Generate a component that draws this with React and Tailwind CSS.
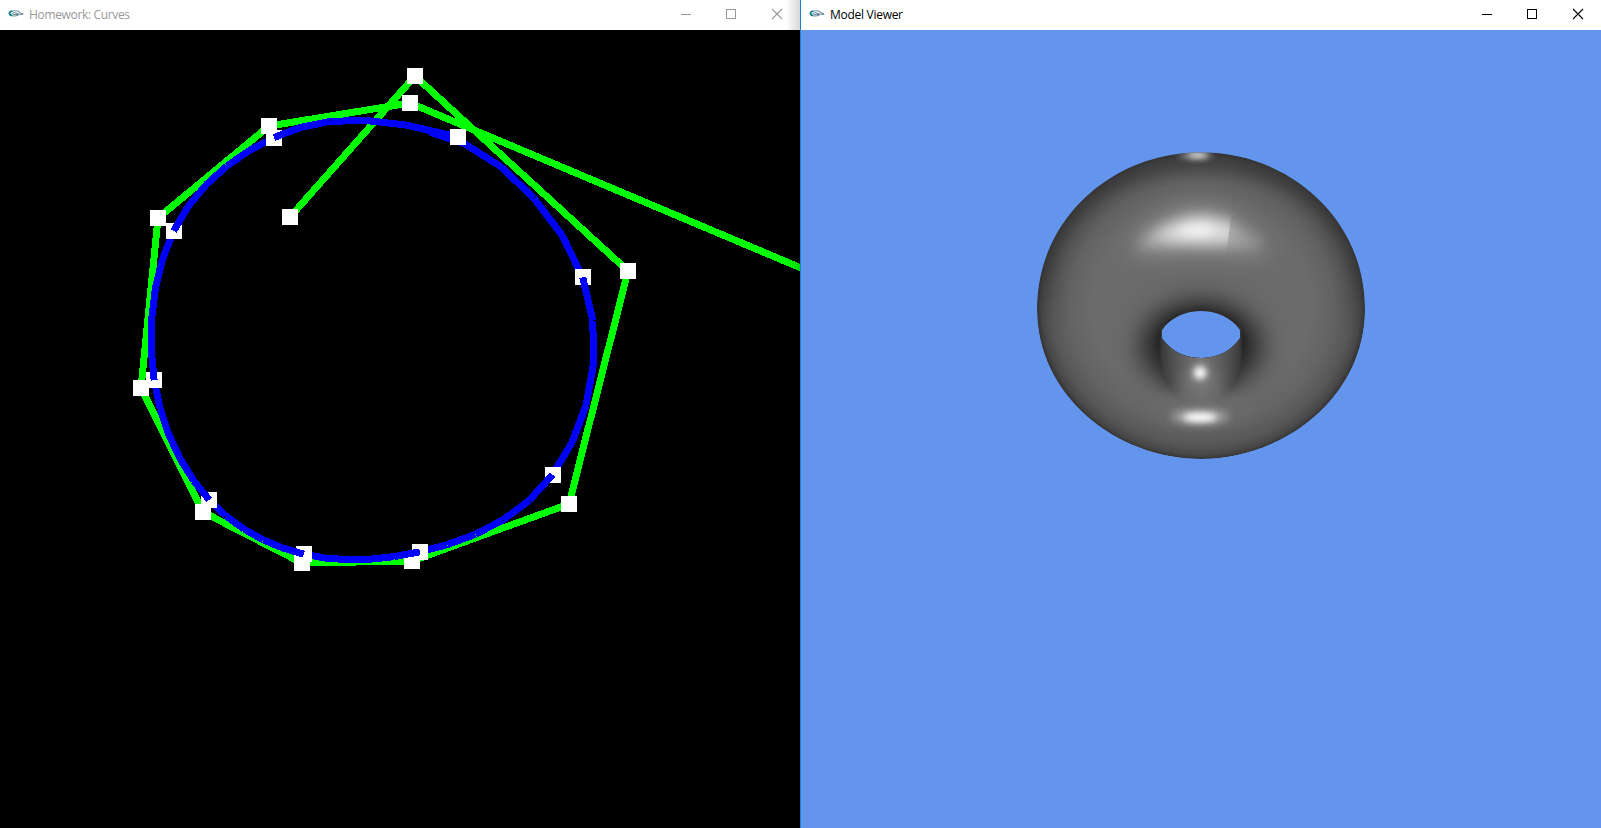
const CONTROL = [
  [290, 187], [415, 46], [628, 241], [569, 474], [412, 531], [302, 533],
  [203, 482], [141, 358], [158, 188], [269, 96], [410, 73], [839, 254],
];

function splinePoint(i, t) {
  const w = [
    (1 - t) ** 3,
    3 * t ** 3 - 6 * t ** 2 + 4,
    -3 * t ** 3 + 3 * t ** 2 + 3 * t + 1,
    t ** 3,
  ];
  return [0, 1].map((axis) => w.reduce((sum, k, j) => sum + (k * CONTROL[i + j][axis]) / 6, 0));
}

const STEPS = 5;
const PIECES = CONTROL.slice(3).map((_, i) =>
  Array.from({ length: STEPS + 1 }, (_, s) => splinePoint(i, s / STEPS)),
);

function Segments({ points, color, width }) {
  return points.slice(1).map((p, i) => (
    <line key={i} x1={points[i][0]} y1={points[i][1]} x2={p[0]} y2={p[1]} stroke={color} strokeWidth={width} />
  ));
}

function Knot({ at }) {
  return <rect x={Math.round(at[0]) - 8} y={Math.round(at[1]) - 8} width="16" height="16" fill="#fff" />;
}

function CurveCanvas() {
  return (
    <svg width="800" height="798" viewBox="0 0 800 798" shapeRendering="crispEdges" className="block bg-black">
      <Segments points={CONTROL} color="#00ff00" width={7} />
      {CONTROL.map((p, i) => <Knot key={i} at={p} />)}
      {PIECES.map((pts, i) => (
        <g key={i}>
          <Segments points={pts} color="#0000ff" width={7} />
          <Knot at={pts[STEPS]} />
        </g>
      ))}
    </svg>
  );
}

const OUTER = "M51 508 C51 235 280 37 543 37 S1035 235 1035 508 C1035 765 800 957 543 957 S51 765 51 508 Z";
const HOLE = "M426 570 C452 530 500 513 543 513 S634 530 660 570 L660 595 C632 636 590 654 543 654 S454 636 426 595 Z";
const WALL = "M424 560 C416 640 420 700 440 732 C462 776 500 800 543 800 S624 776 646 732 C666 700 670 640 662 560 Z";

function Blur({ id, size }) {
  return (
    <filter id={id} filterUnits="userSpaceOnUse" x="-100" y="-100" width="1280" height="1190" colorInterpolationFilters="sRGB">
      <feGaussianBlur stdDeviation={size} />
    </filter>
  );
}

function Torus() {
  return (
    <svg width="360" height="330" viewBox="0 0 1080 990" className="block">
      <defs>
        <clipPath id="body"><path d={OUTER + HOLE} clipRule="evenodd" shapeRendering="crispEdges" /></clipPath>
        <radialGradient id="shell">
          <stop offset="0" stopColor="#6a6a6a" />
          <stop offset="0.66" stopColor="#6b6b6b" />
          <stop offset="0.8" stopColor="#646464" />
          <stop offset="0.91" stopColor="#575757" />
          <stop offset="0.97" stopColor="#484848" />
          <stop offset="1" stopColor="#363636" />
        </radialGradient>
        <linearGradient id="wall" x1="0" x2="1" y1="0" y2="0">
          <stop offset="0" stopColor="#363636" />
          <stop offset="0.1" stopColor="#484848" />
          <stop offset="0.3" stopColor="#626262" />
          <stop offset="0.5" stopColor="#767676" />
          <stop offset="0.7" stopColor="#626262" />
          <stop offset="0.9" stopColor="#484848" />
          <stop offset="1" stopColor="#363636" />
        </linearGradient>
        <linearGradient id="fade" gradientUnits="userSpaceOnUse" x1="0" x2="0" y1="560" y2="800">
          <stop offset="0" stopColor="#fff" />
          <stop offset="0.6" stopColor="#fff" />
          <stop offset="1" stopColor="#fff" stopOpacity="0" />
        </linearGradient>
        <mask id="wallmask"><rect x="400" y="540" width="290" height="262" fill="url(#fade)" /></mask>
        <mask id="seammask"><ellipse cx="640" cy="272" rx="80" ry="50" fill="#fff" filter="url(#b16)" /></mask>
        <Blur id="b2" size="2.5" />
        <Blur id="b6" size="9" />
        <Blur id="b11" size="14" />
        <Blur id="b16" size="20" />
        <Blur id="b30" size="38" />
      </defs>
      <g clipPath="url(#body)">
        <path d={OUTER} fill="url(#shell)" />
        <path d="M52 500 C52 230 280 32 543 32 S1034 230 1034 500" fill="none" stroke="#222" strokeOpacity="0.35" strokeWidth="70" filter="url(#b30)" />
        <path d="M52 400 C90 200 290 62 543 62 S996 200 1034 400" fill="none" stroke="#3a3a3a" strokeOpacity="0.4" strokeWidth="66" filter="url(#b11)" />
        <ellipse cx="543" cy="618" rx="180" ry="135" fill="#000" fillOpacity="0.66" filter="url(#b30)" />
        <ellipse cx="543" cy="598" rx="118" ry="76" fill="#000" fillOpacity="0.62" filter="url(#b16)" />
        <ellipse cx="543" cy="800" rx="165" ry="36" fill="#6b6b6b" filter="url(#b16)" />
        <g filter="url(#b2)">
          <path d={WALL} fill="url(#wall)" mask="url(#wallmask)" />
        </g>
        <ellipse cx="543" cy="735" rx="66" ry="40" fill="#7a7a7a" fillOpacity="0.8" filter="url(#b16)" />
        <path d="M320 350 Q410 205 535 205 T755 350 Q640 335 535 335 T320 350 Z" fill="#a8a8a8" fillOpacity="0.6" filter="url(#b30)" />
        <path d="M350 318 Q420 234 535 226 T725 316 Q640 322 540 320 T350 318 Z" fill="#c8c8c8" fillOpacity="0.66" filter="url(#b16)" />
        <path d="M405 292 Q480 236 545 236 T670 292 Q600 304 540 304 T405 292 Z" fill="#fff" fillOpacity="0.62" filter="url(#b16)" />
        <path d="M470 276 Q500 254 535 254 T585 276 Q560 288 535 288 T470 276 Z" fill="#fff" fillOpacity="0.6" filter="url(#b11)" />
        <g mask="url(#seammask)">
          <path d="M650 120 L638 200 L617 350 H800 V120 Z" fill="#6a6a6a" fillOpacity="0.36" />
        </g>
        <path d="M650 50 V120 L638 200" fill="none" stroke="#444" strokeOpacity="0.15" strokeWidth="2" />
        <ellipse cx="527" cy="46" rx="52" ry="9" fill="#aaa" fillOpacity="0.8" filter="url(#b6)" />
        <ellipse cx="533" cy="45" rx="28" ry="7" fill="#fff" filter="url(#b6)" />
        <ellipse cx="540" cy="698" rx="24" ry="24" fill="#bbb" fillOpacity="0.6" filter="url(#b11)" />
        <ellipse cx="540" cy="698" rx="17" ry="18" fill="#fff" filter="url(#b6)" />
        <ellipse cx="540" cy="830" rx="86" ry="20" fill="#ccc" fillOpacity="0.7" filter="url(#b11)" />
        <ellipse cx="540" cy="832" rx="50" ry="13" fill="#fff" filter="url(#b6)" />
      </g>
    </svg>
  );
}

function AppIcon() {
  return (
    <svg width="16" height="16" viewBox="0 0 16 16" fill="none" className="block">
      <path d="M10.500 4.200C6.500 3.100 1.300 4 1.200 6.400s4.600 3.200 9.300 1.900" stroke="#6a98a6" strokeWidth="1.100" />
      <path d="M4.200 4.100C.8 4.800.4 7.600 4.200 8.500" stroke="#14808a" strokeWidth="1.700" />
      <path d="M10 4.200c1.300 1 3 2.200 5.200 2.900-3.500.5-5.700-.2-7.500-1.100-2-.9-4 .1-3 1 1.200 1 4 .6 5.600.4" stroke="#56788a" strokeWidth="1" />
    </svg>
  );
}

function TitleBar({ title, active }) {
  return (
    <header className={"flex h-[30px] items-center bg-white pl-2 " + (active ? "text-black" : "text-[#999999]")}>
      <AppIcon />
      <h1 className={"ml-[5px] flex-1 font-['Open_Sans','Noto_Sans',sans-serif] text-[12px] leading-[30px] " + (active ? "tracking-[-0.28px]" : "tracking-[-0.34px]")}>{title}</h1>
      <svg width="138" height="30" viewBox="0 0 138 30" fill="none" stroke="currentColor" shapeRendering="crispEdges" className="block">
        <path d="M19 14.500h10M64.500 9.500h9v9h-9z" />
        <path d="M110 9l10 10M120 9l-10 10" shapeRendering="auto" strokeWidth="1.100" />
      </svg>
    </header>
  );
}

export default function App() {
  return (
    <main className="flex h-[828px] w-[1601px] overflow-hidden">
      <section className="relative w-[800px]">
        <TitleBar title="Homework: Curves" />
        <CurveCanvas />
        <div className="absolute top-0 right-0 h-full w-3.5 bg-linear-to-r from-transparent to-black/15" />
      </section>
      <section className="w-[801px] border-l border-[#1883d7] bg-[#6495ed]">
        <TitleBar title="Model Viewer" active />
        <div className="pt-[110px] pl-[219px]"><Torus /></div>
      </section>
    </main>
  );
}
